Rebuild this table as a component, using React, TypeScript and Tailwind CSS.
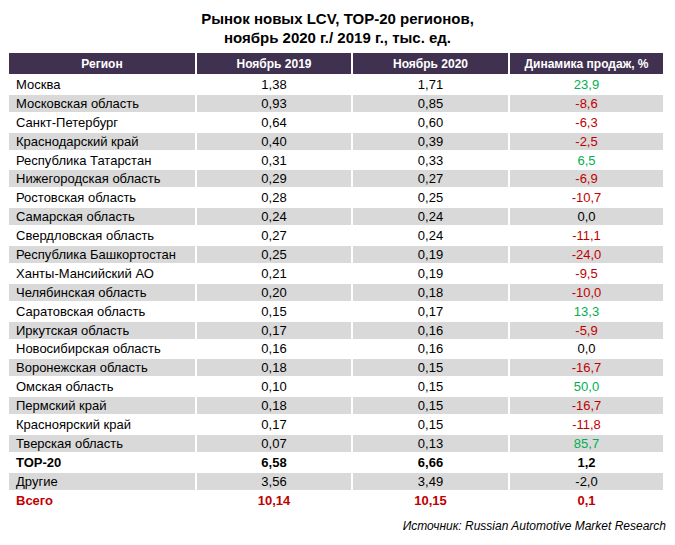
import React from "react";

type Row = {
  region: string;
  y2019: string;
  y2020: string;
  dyn: string;
  kind?: "total" | "all";
};

const rows: Row[] = [
  { region: "Москва", y2019: "1,38", y2020: "1,71", dyn: "23,9" },
  { region: "Московская область", y2019: "0,93", y2020: "0,85", dyn: "-8,6" },
  { region: "Санкт-Петербург", y2019: "0,64", y2020: "0,60", dyn: "-6,3" },
  { region: "Краснодарский край", y2019: "0,40", y2020: "0,39", dyn: "-2,5" },
  { region: "Республика Татарстан", y2019: "0,31", y2020: "0,33", dyn: "6,5" },
  { region: "Нижегородская область", y2019: "0,29", y2020: "0,27", dyn: "-6,9" },
  { region: "Ростовская область", y2019: "0,28", y2020: "0,25", dyn: "-10,7" },
  { region: "Самарская область", y2019: "0,24", y2020: "0,24", dyn: "0,0" },
  { region: "Свердловская область", y2019: "0,27", y2020: "0,24", dyn: "-11,1" },
  { region: "Республика Башкортостан", y2019: "0,25", y2020: "0,19", dyn: "-24,0" },
  { region: "Ханты-Мансийский АО", y2019: "0,21", y2020: "0,19", dyn: "-9,5" },
  { region: "Челябинская область", y2019: "0,20", y2020: "0,18", dyn: "-10,0" },
  { region: "Саратовская область", y2019: "0,15", y2020: "0,17", dyn: "13,3" },
  { region: "Иркутская область", y2019: "0,17", y2020: "0,16", dyn: "-5,9" },
  { region: "Новосибирская область", y2019: "0,16", y2020: "0,16", dyn: "0,0" },
  { region: "Воронежская область", y2019: "0,18", y2020: "0,15", dyn: "-16,7" },
  { region: "Омская область", y2019: "0,10", y2020: "0,15", dyn: "50,0" },
  { region: "Пермский край", y2019: "0,18", y2020: "0,15", dyn: "-16,7" },
  { region: "Красноярский край", y2019: "0,17", y2020: "0,15", dyn: "-11,8" },
  { region: "Тверская область", y2019: "0,07", y2020: "0,13", dyn: "85,7" },
  { region: "TOP-20", y2019: "6,58", y2020: "6,66", dyn: "1,2", kind: "total" },
  { region: "Другие", y2019: "3,56", y2020: "3,49", dyn: "-2,0", kind: "total" },
  { region: "Всего", y2019: "10,14", y2020: "10,15", dyn: "0,1", kind: "all" },
];

function dynColor(row: Row) {
  if (row.kind) return "";
  if (row.dyn.startsWith("-")) return "text-[#c00000]";
  if (row.dyn === "0,0") return "text-black";
  return "text-[#00b050]";
}

export default function App() {
  return (
    <div className="w-[675px] h-[545px] bg-white pt-[9px] font-['Liberation_Sans',Arial,sans-serif] text-black">
      <h1 className="text-center text-[15px] leading-[19px] font-bold">
        Рынок новых LCV, TOP-20 регионов,
        <br />
        ноябрь 2020 г./ 2019 г., тыс. ед.
      </h1>

      <div className="ml-[9px] mt-[6px] w-[654px] flex flex-col gap-[2px]">
        <div className="grid grid-cols-[186px_154px_155px_153px] gap-x-[2px] h-[21px] text-white text-[12px] font-bold">
          <div className="bg-[#403151] flex items-center justify-center">Регион</div>
          <div className="bg-[#403151] flex items-center justify-center">Ноябрь 2019</div>
          <div className="bg-[#403151] flex items-center justify-center">Ноябрь 2020</div>
          <div className="bg-[#403151] flex items-center justify-center">Динамика продаж, %</div>
        </div>

        {rows.map((row, i) => {
          const bg = i % 2 === 1 ? "bg-[#d9d9d9]" : "bg-white";
          const weight = row.kind === "all" && "font-bold text-[#c00000]";
          const isTop = row.region === "TOP-20";
          return (
            <div
              key={row.region}
              className={`grid grid-cols-[186px_154px_155px_153px] gap-x-[2px] h-[16.9px] text-[13px] leading-[16px] ${
                isTop ? "font-bold" : ""
              } ${weight || ""}`}
            >
              <div className={`${bg} pl-[7px] pt-[1px] whitespace-nowrap`}>{row.region}</div>
              <div className={`${bg} pt-[1px] text-center`}>{row.y2019}</div>
              <div className={`${bg} pt-[1px] text-center`}>{row.y2020}</div>
              <div className={`${bg} pt-[1px] text-center ${dynColor(row)}`}>{row.dyn}</div>
            </div>
          );
        })}
      </div>

      <p className="w-[666px] mt-[11px] text-right text-[12px] italic leading-[14px]">
        Источник: Russian Automotive Market Research
      </p>
    </div>
  );
}
